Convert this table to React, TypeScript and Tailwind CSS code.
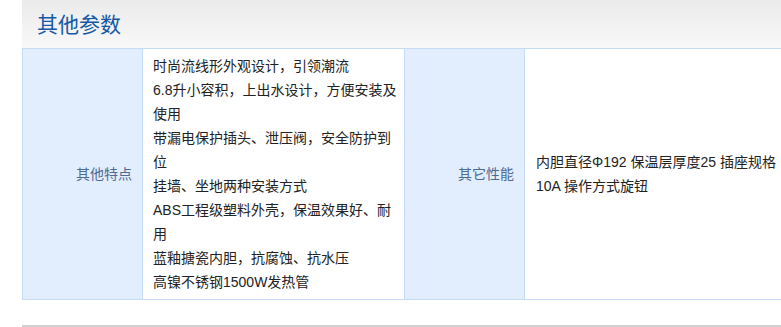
const features = [
  '时尚流线形外观设计，引领潮流',
  '6.8升小容积，上出水设计，方便安装及使用',
  '带漏电保护插头、泄压阀，安全防护到位',
  '挂墙、坐地两种安装方式',
  'ABS工程级塑料外壳，保温效果好、耐用',
  '蓝釉搪瓷内胆，抗腐蚀、抗水压',
  '高镍不锈钢1500W发热管',
]

const App = () => {
  return (
    <div
      className="w-[781px] h-[327px] overflow-hidden bg-white pl-[22px] text-[14px] text-[#222]"
      style={{ fontFamily: '"Liberation Sans", "Noto Sans CJK SC", sans-serif' }}
    >
      {/* section header */}
      <div className="w-[800px] h-[48px] flex items-center pl-[15px] bg-gradient-to-b from-[#ebebeb] to-[#f8f8f8]">
        <h2 className="text-[21px] leading-none text-[#1458a6] font-normal">其他参数</h2>
      </div>

      {/* params table */}
      <div className="w-[800px] grid grid-cols-[120px_262px_120px_298px] border-t border-l border-b border-[#c6dcf5]">
        <div className="bg-[#e2eefd] border-r border-[#c6dcf5] flex items-center justify-end pr-[10px] text-[#4d6a94]">
          其他特点
        </div>
        <div className="border-r border-[#c6dcf5] py-[5px] pl-[10px] pr-[4px] leading-[24px]">
          {features.map((f) => (
            <div key={f}>{f}</div>
          ))}
        </div>
        <div className="bg-[#e2eefd] border-r border-[#c6dcf5] flex items-center justify-end pr-[10px] text-[#4d6a94]">
          其它性能
        </div>
        <div className="flex items-center pl-[11px] pr-[40px] leading-[24px]">
          <div>内胆直径Φ192 保温层厚度25 插座规格 10A 操作方式旋钮</div>
        </div>
      </div>

      <div className="mt-[25px] w-[800px] border-t-2 border-[#cfcfcf]" />
    </div>
  )
}

export default App
